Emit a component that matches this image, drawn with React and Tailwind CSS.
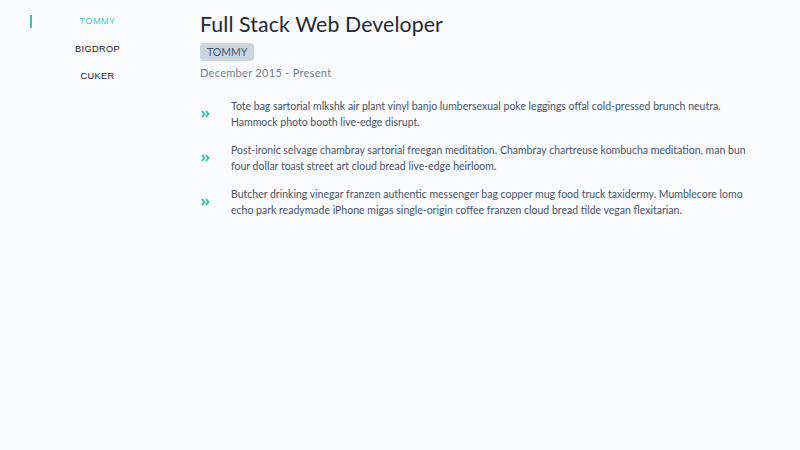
import React from "react";

const items = [
  "Tote bag sartorial mlkshk air plant vinyl banjo lumbersexual poke leggings offal cold-pressed brunch neutra. Hammock photo booth live-edge disrupt.",
  "Post-ironic selvage chambray sartorial freegan meditation. Chambray chartreuse kombucha meditation, man bun four dollar toast street art cloud bread live-edge heirloom.",
  "Butcher drinking vinegar franzen authentic messenger bag copper mug food truck taxidermy. Mumblecore lomo echo park readymade iPhone migas single-origin coffee franzen cloud bread tilde vegan flexitarian.",
];

const nav = ["TOMMY", "BIGDROP", "CUKER"];

function Chevrons() {
  return (
    <svg width="9" height="8" viewBox="0 0 9 8" className="shrink-0">
      <path d="M1 1 L3.5 4 L1 7" fill="none" stroke="#2bc0a7" strokeWidth="1.8" />
      <path d="M5 1 L7.5 4 L5 7" fill="none" stroke="#2bc0a7" strokeWidth="1.8" />
    </svg>
  );
}

export default function App() {
  return (
    <div className="w-[800px] h-[450px] bg-[#f8fafc] flex">
      <div className="w-[200px] pl-[30px] pt-[15px] shrink-0">
        <ul className="w-[133px] flex flex-col gap-[14.5px] font-['Liberation_Sans',Arial,sans-serif]">
          {nav.map((n, i) => (
            <li
              key={n}
              className={
                "h-[13px] leading-[13px] flex items-center justify-center border-l-2 text-[9.2px] tracking-[0.4px] " +
                (i === 0 ? "border-[#3fc1ab] text-[#52ccb7]" : "border-transparent text-[#222222]")
              }
            >
              {n}
            </li>
          ))}
        </ul>
      </div>
      <div className="pt-[10px] w-[560px] font-['Lato',sans-serif]">
        <h1 className="text-[21.3px] leading-[28px] text-[#1f2937] tracking-[0.1px]">Full Stack Web Developer</h1>
        <div className="mt-[5px] flex">
          <span className="bg-[#cbd5e1] text-[#475569] text-[10.5px] leading-[18px] px-[7px] rounded-[3px]">TOMMY</span>
        </div>
        <div className="mt-[4px] text-[11px] leading-[16px] text-[#718096] tracking-[0.3px]">December 2015 - Present</div>
        <ul className="mt-[17px] flex flex-col gap-[12px]">
          {items.map((t, i) => (
            <li key={i} className="flex items-center">
              <div className="w-[31px] shrink-0 flex pl-[1px]">
                <Chevrons />
              </div>
              <p className="w-[520px] text-[10.5px] leading-[16px] text-[#4a5568]">{t}</p>
            </li>
          ))}
        </ul>
      </div>
    </div>
  );
}
